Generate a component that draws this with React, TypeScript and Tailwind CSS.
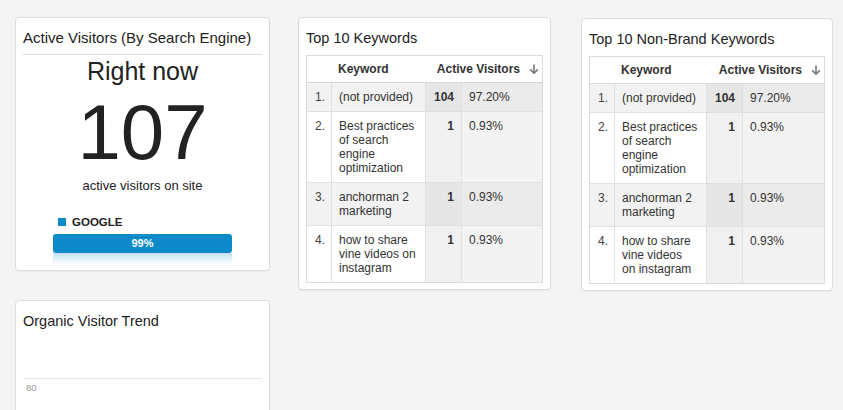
import React from "react";

type Row = { n: string; kw: string[]; count: string; pct: string };

const baseRows: Row[] = [
  { n: "1.", kw: ["(not provided)"], count: "104", pct: "97.20%" },
  { n: "2.", kw: ["Best practices", "of search", "engine", "optimization"], count: "1", pct: "0.93%" },
  { n: "3.", kw: ["anchorman 2", "marketing"], count: "1", pct: "0.93%" },
  { n: "4.", kw: ["how to share", "vine videos on", "instagram"], count: "1", pct: "0.93%" },
];

const nonBrandRows: Row[] = baseRows.map((r, i) =>
  i === 3 ? { ...r, kw: ["how to share", "vine videos", "on instagram"] } : r
);

function SortArrow() {
  return (
    <svg width="10" height="10" viewBox="0 0 10 10" className="ml-[9px] shrink-0">
      <path d="M5 0.5 V9" stroke="#777" strokeWidth="1.6" fill="none" />
      <path d="M1.2 5.4 L5 9.2 L8.8 5.4" stroke="#777" strokeWidth="1.6" fill="none" />
    </svg>
  );
}

function KeywordTable({ rows, width, kwWidth }: { rows: Row[]; width: string; kwWidth: string }) {
  return (
    <div className={`${width} border border-[#dcdcdc] text-[12px] leading-[14px] text-[#333]`}>
      {/* header */}
      <div className="flex h-[27px] items-center border-b border-[#d6d6d6] bg-white font-bold">
        <div className="w-[25px] shrink-0" />
        <div className={`${kwWidth} shrink-0 pl-[6px]`}>Keyword</div>
        <div className="flex flex-1 items-center justify-end pr-[3px]">
          Active Visitors
          <SortArrow />
        </div>
      </div>
      {rows.map((r, i) => {
        const odd = i % 2 === 0;
        return (
          <div key={r.n} className={`flex border-b border-[#e0e0e0] last:border-b-0 ${odd ? "bg-[#f2f2f2]" : "bg-white"}`}>
            <div className="w-[25px] shrink-0 border-r border-[#e0e0e0] py-[7px] pl-[8px] text-[#444]">{r.n}</div>
            <div className={`${kwWidth} shrink-0 border-r border-[#e0e0e0] py-[7px] pl-[7px] whitespace-nowrap`}>
              {r.kw.map((l) => (
                <div key={l}>{l}</div>
              ))}
            </div>
            <div
              className={`w-[36px] shrink-0 border-r border-[#e0e0e0] py-[7px] pr-[7px] text-right font-bold ${
                odd ? "bg-[#e6e6e6]" : "bg-[#f0f0f0]"
              }`}
            >
              {r.count}
            </div>
            <div className={`flex-1 py-[7px] pl-[7px] ${odd ? "bg-[#ebebeb]" : "bg-[#f3f3f3]"}`}>{r.pct}</div>
          </div>
        );
      })}
    </div>
  );
}

function CardTitle({ children }: { children: React.ReactNode }) {
  return <div className="h-[20px] text-[14.5px] leading-[20px] text-[#222]">{children}</div>;
}

export default function App() {
  return (
    <div
      className="flex h-[410px] w-full items-start overflow-hidden bg-[#f4f4f4] pl-[15px] pt-[17px]"
      style={{ fontFamily: '"Liberation Sans", Arial, sans-serif' }}
    >
      {/* left column */}
      <div className="flex w-[255px] shrink-0 flex-col gap-[29px]">
        <div className="rounded-[4px] border border-[#dddddd] bg-white px-[7px] pb-[5px] pt-[10px] shadow-[0_1px_1px_rgba(0,0,0,0.04)]">
          <div className="border-b border-[#dcdcdc] pb-[6px]">
            <div className="h-[20px] text-[15px] leading-[20px] text-[#222]">Active Visitors (By Search Engine)</div>
          </div>
          <div className="flex flex-col items-center text-[#222]">
            <div className="mt-[2px] text-[25px] leading-[28px]">Right now</div>
            <div className="mt-[8px] text-[78px] leading-[78px]">107</div>
            <div className="mt-[7px] text-[13px] leading-[16px]">active visitors on site</div>
            <div className="mt-[21px] w-[179px]">
              <div className="flex h-[14px] items-center gap-[6px] pl-[5px]">
                <span className="h-[8px] w-[8px] bg-[#0c8ac9]" />
                <span className="text-[11.5px] font-bold leading-[14px] text-[#222]">GOOGLE</span>
              </div>
              <div className="mt-[5px] flex h-[19px] items-center justify-center rounded-[3px] bg-[#0c8ac9] text-[11px] font-bold text-white">
                99%
              </div>
              <div className="h-[12px] bg-gradient-to-b from-[#0c8ac9]/25 to-white/0" />
            </div>
          </div>
        </div>

        <div className="h-[150px] rounded-[4px] border border-[#dddddd] bg-white px-[7px] pt-[10px]">
          <CardTitle>Organic Visitor Trend</CardTitle>
          <div className="mt-[47px] h-px bg-[#e6e6e6]" />
          <div className="mt-[4px] pl-[3px] text-[9.5px] leading-none text-[#999]">80</div>
        </div>
      </div>

      {/* Top 10 keywords */}
      <div className="ml-[28px] w-[253px] shrink-0 rounded-[4px] border border-[#dddddd] bg-white px-[7px] pb-[6px] pt-[10px] shadow-[0_1px_1px_rgba(0,0,0,0.04)]">
        <CardTitle>Top 10 Keywords</CardTitle>
        <div className="mt-[7px]">
          <KeywordTable rows={baseRows} width="w-[237px]" kwWidth="w-[94px]" />
        </div>
      </div>

      {/* Top 10 non-brand keywords */}
      <div className="ml-[30px] mt-[1px] w-[252px] shrink-0 rounded-[4px] border border-[#dddddd] bg-white px-[7px] pb-[6px] pt-[10px] shadow-[0_1px_1px_rgba(0,0,0,0.04)]">
        <CardTitle>Top 10 Non-Brand Keywords</CardTitle>
        <div className="mt-[7px]">
          <KeywordTable rows={nonBrandRows} width="w-[236px]" kwWidth="w-[92px]" />
        </div>
      </div>
    </div>
  );
}
